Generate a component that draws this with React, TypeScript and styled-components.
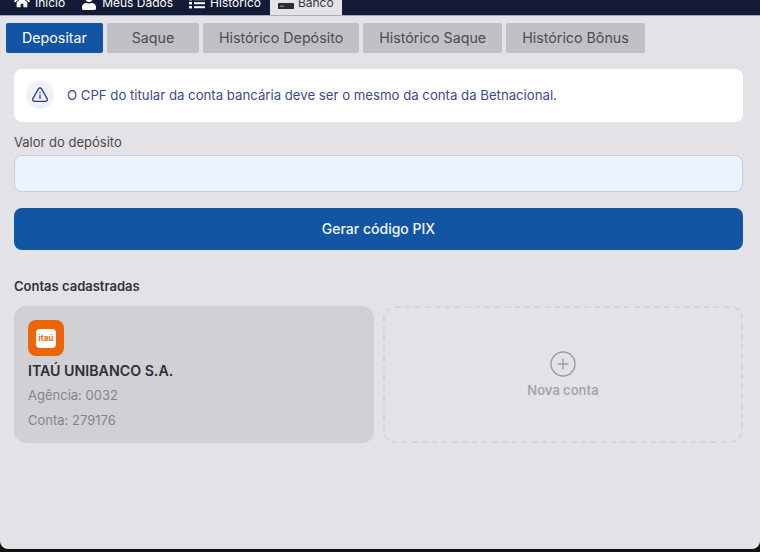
import styled, { createGlobalStyle } from "styled-components";
import { FaHome, FaUser } from "react-icons/fa";

const GlobalStyle = createGlobalStyle`
  html, body {
    margin: 0;
    height: 100%;
    overflow: hidden;
    background: #111114;
  }
  * {
    box-sizing: border-box;
  }
`;

const App: React.FC = () => {
  return (
    <Page>
      <GlobalStyle />
      <TopNav>
        <NavItem>
          <HomeGlyph size={16} />
          Início
        </NavItem>
        <NavItem>
          <FaUser size={16} />
          Meus Dados
        </NavItem>
        <NavItem>
          <ListIcon />
          Histórico
        </NavItem>
        <NavItem $active>
          <CardIcon />
          Banco
        </NavItem>
      </TopNav>

      <Content>
        <Tabs>
          <Tab $active>Depositar</Tab>
          <Tab $width={92}>Saque</Tab>
          <Tab>Histórico Depósito</Tab>
          <Tab>Histórico Saque</Tab>
          <Tab>Histórico Bônus</Tab>
        </Tabs>

        <Body>
          <Notice>
            <NoticeIcon>
              <WarningIcon />
            </NoticeIcon>
            O CPF do titular da conta bancária deve ser o mesmo da conta da Betnacional.
          </Notice>

          <FieldLabel htmlFor="valor">Valor do depósito</FieldLabel>
          <AmountInput id="valor" type="text" />
          <SubmitButton type="button">Gerar código PIX</SubmitButton>

          <SectionTitle>Contas cadastradas</SectionTitle>
          <Accounts>
            <AccountCard>
              <BankLogo>
                <BankMark>itaú</BankMark>
              </BankLogo>
              <BankName>ITAÚ UNIBANCO S.A.</BankName>
              <BankDetail>Agência: 0032</BankDetail>
              <BankDetail>Conta: 279176</BankDetail>
            </AccountCard>
            <NewAccount>
              <PlusIcon />
              Nova conta
            </NewAccount>
          </Accounts>
        </Body>
      </Content>
    </Page>
  );
};

export default App;

const ListIcon = () => (
  <NavSvg $drop={3} width="16" height="11" viewBox="0 0 16 11" fill="currentColor">
    <rect x="0" y="0" width="3" height="2.4" />
    <rect x="5" y="0.2" width="11" height="2" />
    <rect x="0" y="4" width="3" height="2.4" />
    <rect x="5" y="4.2" width="11" height="2" />
    <rect x="0" y="8" width="3" height="2.4" />
    <rect x="5" y="8.2" width="11" height="2" />
  </NavSvg>
);

const CardIcon = () => (
  <NavSvg $drop={7} width="16" height="6" viewBox="0 0 16 6" fill="#2b2b33">
    <rect x="0" y="0" width="16" height="6" rx="0.6" />
    <rect x="2" y="2.6" width="4" height="1.2" fill="#8d8d96" />
  </NavSvg>
);

const WarningIcon = () => (
  <svg width="18" height="18" viewBox="0 0 20 20" fill="none" stroke="#34427f" strokeWidth="1.5" strokeLinejoin="round" strokeLinecap="round">
    <path d="M8.2 3.2 2.1 14a2.1 2.1 0 0 0 1.8 3.1h12.2a2.1 2.1 0 0 0 1.8-3.1L11.8 3.2a2.1 2.1 0 0 0-3.6 0z" />
    <path d="M10 10v3.6" />
    <path d="M10 7.4v.1" />
  </svg>
);

const PlusIcon = () => (
  <svg width="26" height="26" viewBox="0 0 26 26" fill="none" stroke="#9c9ca3" strokeWidth="1.4" strokeLinecap="round">
    <circle cx="13" cy="13" r="12" />
    <path d="M13 8v10M8 13h10" />
  </svg>
);

const Page = styled.div`
  width: 760px;
  height: 552px;
  display: flex;
  flex-direction: column;
  font-family: Inter, "Liberation Sans", sans-serif;
`;

const TopNav = styled.nav`
  flex: none;
  height: 15px;
  display: flex;
  align-items: flex-end;
  padding-left: 6px;
  background: #141b36;
  overflow: hidden;
`;

const NavItem = styled.div<{ $active?: boolean }>`
  flex: none;
  height: 26px;
  display: flex;
  align-items: center;
  gap: ${(props) => (props.$active ? "4px" : "5px")};
  padding: 0 8px;
  margin-left: ${(props) => (props.$active ? "1px" : "0")};
  font-size: 12px;
  color: ${(props) => (props.$active ? "#3a3a44" : "#ffffff")};
  background: ${(props) => (props.$active ? "#e2e2e7" : "transparent")};
`;

const HomeGlyph = styled(FaHome)`
  margin-bottom: 3px;
`;

const NavSvg = styled.svg<{ $drop: number }>`
  margin-top: ${(props) => props.$drop}px;
`;

const Content = styled.main`
  flex: none;
  height: 534px;
  background: #e2e2e7;
  border-radius: 0 0 8px 8px;
  border-top: 1px solid #a9adbb;
`;

const Tabs = styled.div`
  display: flex;
  gap: 4px;
  padding: 7px 6px 0;
`;

const Tab = styled.div<{ $active?: boolean; $width?: number }>`
  height: 30px;
  display: flex;
  align-items: center;
  justify-content: center;
  padding: 0 16px 1px;
  width: ${(props) => (props.$width ? `${props.$width}px` : "auto")};
  font-size: 14.25px;
  border-radius: 2px;
  color: ${(props) => (props.$active ? "#ffffff" : "#4c4c54")};
  background: ${(props) => (props.$active ? "#1255a3" : "#c0c0c5")};
`;

const Body = styled.div`
  display: flex;
  flex-direction: column;
  padding: 16px 17px 0 14px;
`;

const Notice = styled.div`
  height: 53px;
  display: flex;
  align-items: center;
  gap: 13px;
  padding: 0 0 1px 12px;
  font-size: 13.2px;
  color: #3d4a8f;
  background: #ffffff;
  border-radius: 8px;
`;

const NoticeIcon = styled.div`
  width: 28px;
  height: 28px;
  display: flex;
  align-items: center;
  justify-content: center;
  border-radius: 50%;
  background: #f0f0fa;
`;

const FieldLabel = styled.label`
  margin-top: 12px;
  font-size: 13px;
  line-height: 16px;
  color: #4a4a52;
`;

const AmountInput = styled.input`
  height: 37px;
  margin-top: 5px;
  border: 1px solid #c5cfdc;
  border-radius: 8px;
  background: #edf3fe;
  outline: none;
`;

const SubmitButton = styled.button`
  height: 42px;
  margin-top: 16px;
  padding: 0 0 2px;
  border: none;
  border-radius: 8px;
  font-family: inherit;
  font-size: 14px;
  font-weight: 500;
  color: #f2f5fa;
  background: #1255a3;
`;

const SectionTitle = styled.div`
  margin-top: 28px;
  font-size: 13px;
  line-height: 16px;
  font-weight: 600;
  color: #33333b;
`;

const Accounts = styled.div`
  display: grid;
  grid-template-columns: 360px 360px;
  gap: 9px;
  margin-top: 12px;
`;

const AccountCard = styled.div`
  height: 137px;
  padding: 14px;
  border-radius: 12px;
  background: #d0d0d5;
`;

const BankLogo = styled.div`
  width: 36px;
  height: 36px;
  display: flex;
  align-items: center;
  justify-content: center;
  border-radius: 8px;
  background: #ec6608;
`;

const BankMark = styled.div`
  width: 20px;
  height: 19px;
  display: flex;
  align-items: center;
  justify-content: center;
  border-radius: 4px;
  font-size: 8px;
  font-weight: 700;
  color: #ec6608;
  background: #ffffff;
`;

const BankName = styled.div`
  margin-top: 6px;
  font-size: 14.2px;
  line-height: 17px;
  font-weight: 600;
  color: #2f2f37;
`;

const BankDetail = styled.div`
  margin-top: 7px;
  font-size: 13px;
  line-height: 18px;
  color: #85858c;
`;

const NewAccount = styled.div`
  height: 137px;
  display: flex;
  flex-direction: column;
  align-items: center;
  justify-content: center;
  gap: 5px;
  border: 2px dashed #d6d6db;
  border-radius: 12px;
  font-size: 13px;
  font-weight: 600;
  color: #a6a6ad;
`;
